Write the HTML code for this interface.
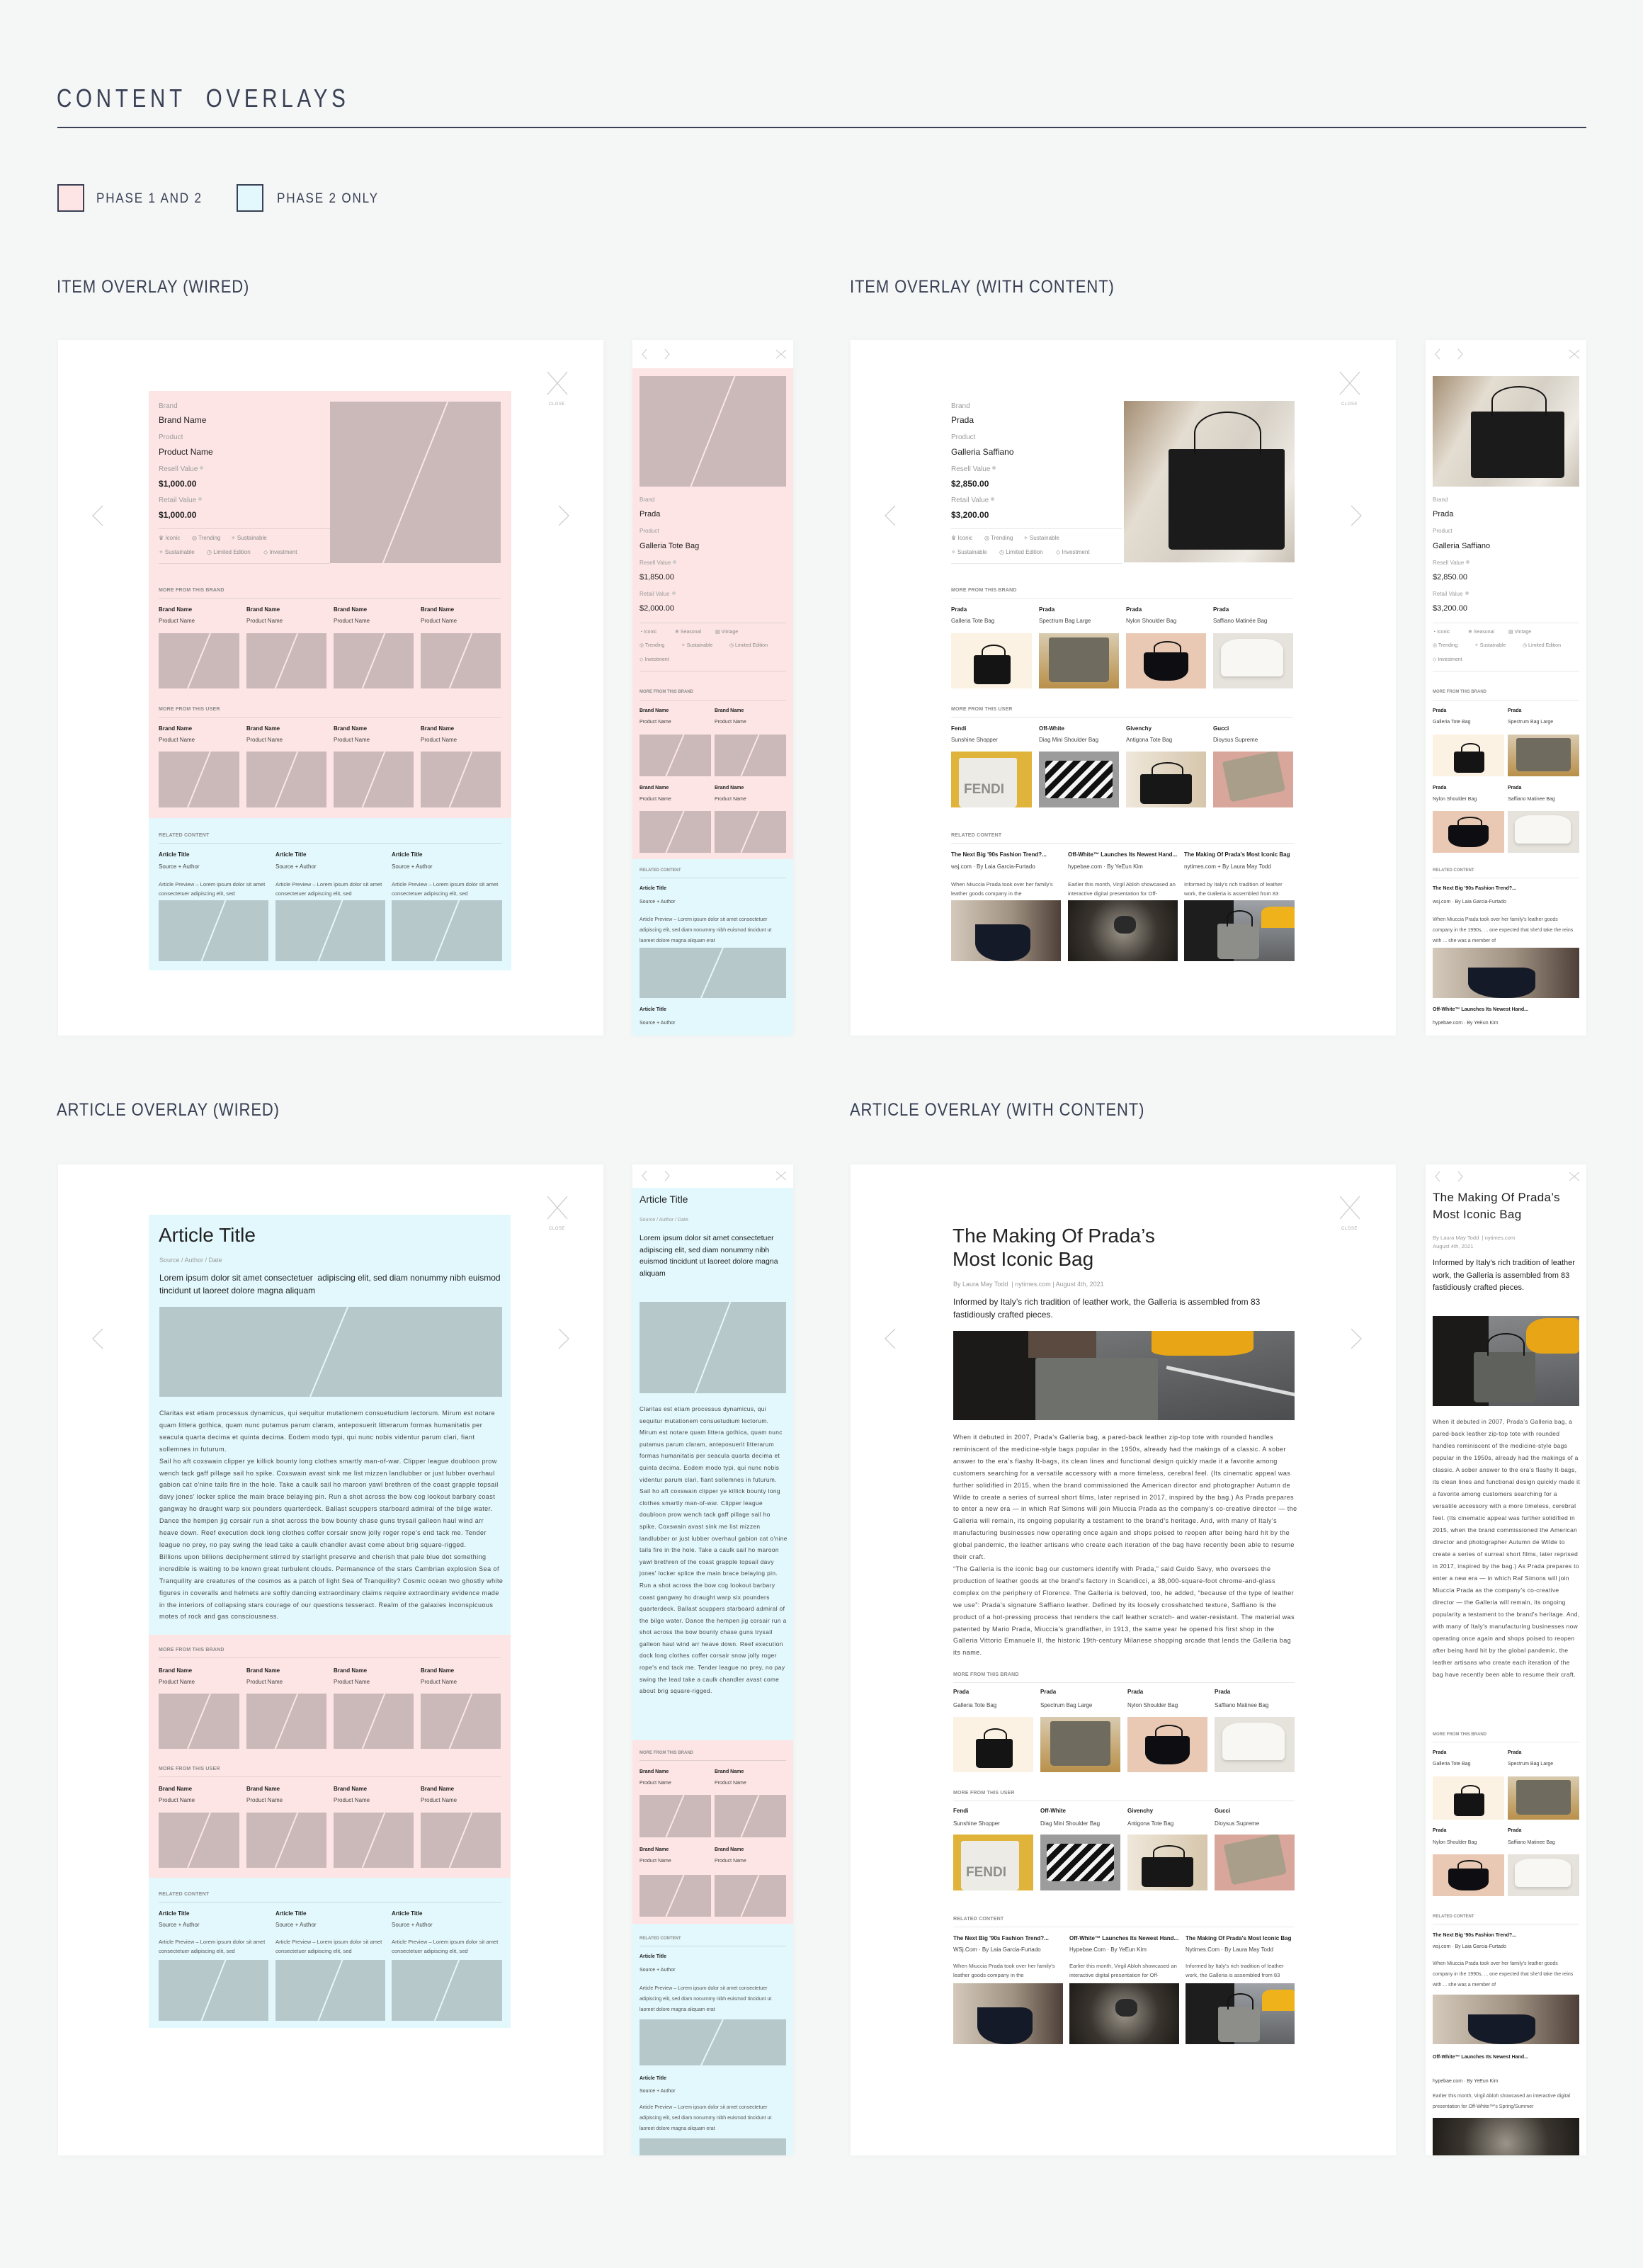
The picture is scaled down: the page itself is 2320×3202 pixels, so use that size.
<!DOCTYPE html>
<html><head><meta charset="utf-8">
<style>
*{margin:0;padding:0;box-sizing:border-box}
body{width:2320px;height:3202px;background:#f4f7f6;position:relative;overflow:hidden;font-family:"Liberation Sans",Arial,sans-serif;color:#222}
.n{font-family:"Liberation Sans",sans-serif;color:#3a4055;position:absolute;white-space:nowrap;line-height:1;transform-origin:0 0}
.pn{position:absolute;background:#fff;box-shadow:0 0 8px rgba(0,0,0,.035);overflow:hidden}
.bg{position:absolute}
.pk{background:#fde5e5}.bl{background:#e3f8fc}
.t{position:absolute;white-space:nowrap;line-height:1}
.l{font-size:10px;color:#9b9b9b}
.v{font-size:12px;color:#1e1e1e}
.g{font-size:8px;color:#8a8a8a}
.s{font-size:7px;color:#8a8a8a;font-weight:bold;letter-spacing:.2px}
.b{font-size:8px;font-weight:bold;color:#222}
.p{font-size:8px;color:#444}
.hr{position:absolute;height:1px;background:#e2d0d0}
.hb{background:#c9dcdf}.hw{background:#e8e8e8}
.pv{position:absolute;font-size:7.6px;line-height:13px;color:#555;overflow:hidden;white-space:normal}
.ph{position:absolute;background-color:#cbb8b9}
.phb{position:absolute;background-color:#b7c8cb}
.ml{font-size:8px;color:#9b9b9b}.mv{font-size:11px;color:#1e1e1e}.mg{font-size:7px;color:#8a8a8a}
.ms{font-size:6px;color:#8a8a8a;font-weight:bold}.mb{font-size:7px;font-weight:bold}.mp{font-size:7px;color:#444}
.dot{display:inline-block;width:5px;height:5px;border-radius:50%;background:#ccc;margin-left:3px;vertical-align:top}
.body{position:absolute;font-size:8.6px;line-height:16.9px;color:#444;white-space:normal}
.bt{font-size:9px;letter-spacing:.45px}
.body p{margin:0}
.ph svg,.phb svg{position:absolute;left:0;top:0;width:100%;height:100%}
.photo{position:absolute;overflow:hidden}
.bag{position:absolute;background:#141414;border-radius:3px 3px 5px 5px}
.bag::before{content:"";position:absolute;left:22%;width:56%;top:-38%;height:42%;border:2px solid #141414;border-bottom:none;border-radius:50% 50% 0 0}
.nh::before{display:none}
</style></head><body>

<div class="n" style="left:80px;top:121px;font-size:36px;letter-spacing:7px;transform:scaleX(.82)">CONTENT&nbsp; OVERLAYS</div>
<div style="position:absolute;left:81px;top:179px;width:2159px;height:2px;background:#3a4055"></div>

<div style="position:absolute;left:81px;top:260px;width:38px;height:39px;border:2px solid #3a4055;background:#fde5e5"></div>
<div class="n" style="left:136px;top:271px;font-size:19px;letter-spacing:2px;transform:scaleX(.9)">PHASE 1 AND 2</div>
<div style="position:absolute;left:334px;top:260px;width:38px;height:39px;border:2px solid #3a4055;background:#e3f8fc"></div>
<div class="n" style="left:391px;top:271px;font-size:19px;letter-spacing:2px;transform:scaleX(.9)">PHASE 2 ONLY</div>

<div class="n" style="left:80px;top:393px;font-size:25px;letter-spacing:1px;transform:scaleX(.88)">ITEM OVERLAY (WIRED)</div>
<div class="n" style="left:1200px;top:393px;font-size:25px;letter-spacing:1px;transform:scaleX(.88)">ITEM OVERLAY (WITH CONTENT)</div>
<div class="n" style="left:80px;top:1555px;font-size:25px;letter-spacing:1px;transform:scaleX(.88)">ARTICLE OVERLAY (WIRED)</div>
<div class="n" style="left:1200px;top:1555px;font-size:25px;letter-spacing:1px;transform:scaleX(.88)">ARTICLE OVERLAY (WITH CONTENT)</div>

<!-- ============ P1 desktop item wired ============ -->
<div class="pn" style="left:82px;top:480px;width:770px;height:982px">
 <div class="bg pk" style="left:128px;top:72px;width:512px;height:603px"></div>
 <div class="bg bl" style="left:128px;top:675px;width:512px;height:215px"></div>
 <svg style="position:absolute;left:46px;top:232px" width="20" height="32"><polyline points="17,2 3,16 17,30" fill="none" stroke="#c9c9c9" stroke-width="1.2"/></svg>
 <svg style="position:absolute;left:704px;top:232px" width="20" height="32"><polyline points="3,2 17,16 3,30" fill="none" stroke="#c9c9c9" stroke-width="1.2"/></svg>
 <svg style="position:absolute;left:690px;top:44px" width="30" height="34"><path d="M1 1L29 33M29 1L1 33" stroke="#c9c9c9" stroke-width="1.2"/></svg>
 <div class="t" style="left:693px;top:88px;font-size:6px;color:#aaa;letter-spacing:.5px">CLOSE</div>

 <div class="t l" style="left:142px;top:89px">Brand</div>
 <div class="t v" style="left:142px;top:107px">Brand Name</div>
 <div class="t l" style="left:142px;top:133px">Product</div>
 <div class="t v" style="left:142px;top:152px">Product Name</div>
 <div class="t l" style="left:142px;top:178px">Resell Value<span class="dot"></span></div>
 <div class="t v" style="left:142px;top:197px;font-weight:bold">$1,000.00</div>
 <div class="t l" style="left:142px;top:222px">Retail Value<span class="dot"></span></div>
 <div class="t v" style="left:142px;top:241px;font-weight:bold">$1,000.00</div>
 <div class="hr" style="left:142px;top:266px;width:242px"></div>
 <div class="t g" style="left:142px;top:276px">♛ Iconic</div>
 <div class="t g" style="left:189px;top:276px">◎ Trending</div>
 <div class="t g" style="left:244px;top:276px">✧ Sustainable</div>
 <div class="t g" style="left:142px;top:296px">✧ Sustainable</div>
 <div class="t g" style="left:210px;top:296px">◷ Limited Edition</div>
 <div class="t g" style="left:290px;top:296px">◇ Investment</div>
 <div class="hr" style="left:142px;top:315px;width:242px"></div>
 <div class="ph" style="left:384px;top:87px;width:241px;height:228px"><svg viewBox="0 0 100 100" preserveAspectRatio="none"><line x1="69" y1="0" x2="31" y2="100" stroke="#fde5e5" stroke-width="2" vector-effect="non-scaling-stroke"/></svg></div>

 <div class="t s" style="left:142px;top:350px">MORE FROM THIS BRAND</div>
 <div class="hr" style="left:142px;top:364px;width:483px"></div>
 <div class="t b" style="left:142px;top:377px">Brand Name</div><div class="t p" style="left:142px;top:393px">Product Name</div>
 <div class="t b" style="left:266px;top:377px">Brand Name</div><div class="t p" style="left:266px;top:393px">Product Name</div>
 <div class="t b" style="left:389px;top:377px">Brand Name</div><div class="t p" style="left:389px;top:393px">Product Name</div>
 <div class="t b" style="left:512px;top:377px">Brand Name</div><div class="t p" style="left:512px;top:393px">Product Name</div>
 <div class="ph" style="left:142px;top:414px;width:114px;height:78px"><svg viewBox="0 0 100 100" preserveAspectRatio="none"><line x1="64" y1="0" x2="36" y2="100" stroke="#fde5e5" stroke-width="2" vector-effect="non-scaling-stroke"/></svg></div>
 <div class="ph" style="left:266px;top:414px;width:113px;height:78px"><svg viewBox="0 0 100 100" preserveAspectRatio="none"><line x1="64" y1="0" x2="36" y2="100" stroke="#fde5e5" stroke-width="2" vector-effect="non-scaling-stroke"/></svg></div>
 <div class="ph" style="left:389px;top:414px;width:113px;height:78px"><svg viewBox="0 0 100 100" preserveAspectRatio="none"><line x1="64" y1="0" x2="36" y2="100" stroke="#fde5e5" stroke-width="2" vector-effect="non-scaling-stroke"/></svg></div>
 <div class="ph" style="left:512px;top:414px;width:113px;height:78px"><svg viewBox="0 0 100 100" preserveAspectRatio="none"><line x1="64" y1="0" x2="36" y2="100" stroke="#fde5e5" stroke-width="2" vector-effect="non-scaling-stroke"/></svg></div>

 <div class="t s" style="left:142px;top:518px">MORE FROM THIS USER</div>
 <div class="hr" style="left:142px;top:532px;width:483px"></div>
 <div class="t b" style="left:142px;top:545px">Brand Name</div><div class="t p" style="left:142px;top:561px">Product Name</div>
 <div class="t b" style="left:266px;top:545px">Brand Name</div><div class="t p" style="left:266px;top:561px">Product Name</div>
 <div class="t b" style="left:389px;top:545px">Brand Name</div><div class="t p" style="left:389px;top:561px">Product Name</div>
 <div class="t b" style="left:512px;top:545px">Brand Name</div><div class="t p" style="left:512px;top:561px">Product Name</div>
 <div class="ph" style="left:142px;top:581px;width:114px;height:79px"><svg viewBox="0 0 100 100" preserveAspectRatio="none"><line x1="64" y1="0" x2="36" y2="100" stroke="#fde5e5" stroke-width="2" vector-effect="non-scaling-stroke"/></svg></div>
 <div class="ph" style="left:266px;top:581px;width:113px;height:79px"><svg viewBox="0 0 100 100" preserveAspectRatio="none"><line x1="64" y1="0" x2="36" y2="100" stroke="#fde5e5" stroke-width="2" vector-effect="non-scaling-stroke"/></svg></div>
 <div class="ph" style="left:389px;top:581px;width:113px;height:79px"><svg viewBox="0 0 100 100" preserveAspectRatio="none"><line x1="64" y1="0" x2="36" y2="100" stroke="#fde5e5" stroke-width="2" vector-effect="non-scaling-stroke"/></svg></div>
 <div class="ph" style="left:512px;top:581px;width:113px;height:79px"><svg viewBox="0 0 100 100" preserveAspectRatio="none"><line x1="64" y1="0" x2="36" y2="100" stroke="#fde5e5" stroke-width="2" vector-effect="non-scaling-stroke"/></svg></div>

 <div class="t s" style="left:142px;top:696px">RELATED CONTENT</div>
 <div class="hr hb" style="left:142px;top:710px;width:485px"></div>
 <div class="t b" style="left:142px;top:723px">Article Title</div><div class="t p" style="left:142px;top:740px">Source + Author</div>
 <div class="pv" style="left:142px;top:762px;width:155px;height:25px">Article Preview – Lorem ipsum dolor sit amet consectetuer adipiscing elit, sed</div>
 <div class="t b" style="left:307px;top:723px">Article Title</div><div class="t p" style="left:307px;top:740px">Source + Author</div>
 <div class="pv" style="left:307px;top:762px;width:155px;height:25px">Article Preview – Lorem ipsum dolor sit amet consectetuer adipiscing elit, sed</div>
 <div class="t b" style="left:471px;top:723px">Article Title</div><div class="t p" style="left:471px;top:740px">Source + Author</div>
 <div class="pv" style="left:471px;top:762px;width:155px;height:25px">Article Preview – Lorem ipsum dolor sit amet consectetuer adipiscing elit, sed</div>
 <div class="phb" style="left:142px;top:791px;width:155px;height:86px"><svg viewBox="0 0 100 100" preserveAspectRatio="none"><line x1="61" y1="0" x2="39" y2="100" stroke="#e3f8fc" stroke-width="2" vector-effect="non-scaling-stroke"/></svg></div>
 <div class="phb" style="left:307px;top:791px;width:155px;height:86px"><svg viewBox="0 0 100 100" preserveAspectRatio="none"><line x1="61" y1="0" x2="39" y2="100" stroke="#e3f8fc" stroke-width="2" vector-effect="non-scaling-stroke"/></svg></div>
 <div class="phb" style="left:471px;top:791px;width:156px;height:86px"><svg viewBox="0 0 100 100" preserveAspectRatio="none"><line x1="61" y1="0" x2="39" y2="100" stroke="#e3f8fc" stroke-width="2" vector-effect="non-scaling-stroke"/></svg></div>
</div>

<!-- ============ P2 mobile item wired ============ -->
<div class="pn" style="left:893px;top:480px;width:227px;height:982px">
 <div class="bg pk" style="left:0;top:40px;width:227px;height:693px"></div>
 <div class="bg bl" style="left:0;top:733px;width:227px;height:249px"></div>
 <svg style="position:absolute;left:12px;top:12px" width="10" height="16"><polyline points="8,1 2,8 8,15" fill="none" stroke="#c9c9c9" stroke-width="1"/></svg>
 <svg style="position:absolute;left:44px;top:12px" width="10" height="16"><polyline points="2,1 8,8 2,15" fill="none" stroke="#c9c9c9" stroke-width="1"/></svg>
 <svg style="position:absolute;left:202px;top:12px" width="16" height="16"><path d="M1 2L15 14M15 2L1 14" stroke="#c9c9c9" stroke-width="1"/></svg>
 <div class="ph" style="left:10px;top:51px;width:207px;height:156px"><svg viewBox="0 0 100 100" preserveAspectRatio="none"><line x1="65" y1="0" x2="35" y2="100" stroke="#fde5e5" stroke-width="2" vector-effect="non-scaling-stroke"/></svg></div>
 <div class="t ml" style="left:10px;top:222px">Brand</div>
 <div class="t mv" style="left:10px;top:241px">Prada</div>
 <div class="t ml" style="left:10px;top:266px">Product</div>
 <div class="t mv" style="left:10px;top:286px">Galleria Tote Bag</div>
 <div class="t ml" style="left:10px;top:311px">Resell Value<span class="dot"></span></div>
 <div class="t mv" style="left:10px;top:330px">$1,850.00</div>
 <div class="t ml" style="left:10px;top:355px">Retail Value<span class="dot"></span></div>
 <div class="t mv" style="left:10px;top:374px">$2,000.00</div>
 <div class="hr" style="left:10px;top:399px;width:207px"></div>
 <div class="t mg" style="left:10px;top:409px">◔ Iconic</div><div class="t mg" style="left:60px;top:409px">❄ Seasonal</div><div class="t mg" style="left:117px;top:409px">▤ Vintage</div>
 <div class="t mg" style="left:10px;top:428px">◎ Trending</div><div class="t mg" style="left:69px;top:428px">✧ Sustainable</div><div class="t mg" style="left:137px;top:428px">◷ Limited Edition</div>
 <div class="t mg" style="left:10px;top:448px">◇ Investment</div>
 <div class="hr" style="left:10px;top:467px;width:207px"></div>
 <div class="t ms" style="left:10px;top:494px">MORE FROM THIS BRAND</div>
 <div class="hr" style="left:10px;top:508px;width:207px"></div>
 <div class="t mb" style="left:10px;top:520px">Brand Name</div><div class="t mp" style="left:10px;top:536px">Product Name</div>
 <div class="t mb" style="left:116px;top:520px">Brand Name</div><div class="t mp" style="left:116px;top:536px">Product Name</div>
 <div class="ph" style="left:10px;top:557px;width:101px;height:59px"><svg viewBox="0 0 100 100" preserveAspectRatio="none"><line x1="62" y1="0" x2="37" y2="100" stroke="#fde5e5" stroke-width="2" vector-effect="non-scaling-stroke"/></svg></div>
 <div class="ph" style="left:116px;top:557px;width:101px;height:59px"><svg viewBox="0 0 100 100" preserveAspectRatio="none"><line x1="62" y1="0" x2="37" y2="100" stroke="#fde5e5" stroke-width="2" vector-effect="non-scaling-stroke"/></svg></div>
 <div class="t mb" style="left:10px;top:629px">Brand Name</div><div class="t mp" style="left:10px;top:645px">Product Name</div>
 <div class="t mb" style="left:116px;top:629px">Brand Name</div><div class="t mp" style="left:116px;top:645px">Product Name</div>
 <div class="ph" style="left:10px;top:665px;width:101px;height:59px"><svg viewBox="0 0 100 100" preserveAspectRatio="none"><line x1="62" y1="0" x2="37" y2="100" stroke="#fde5e5" stroke-width="2" vector-effect="non-scaling-stroke"/></svg></div>
 <div class="ph" style="left:116px;top:665px;width:101px;height:59px"><svg viewBox="0 0 100 100" preserveAspectRatio="none"><line x1="62" y1="0" x2="37" y2="100" stroke="#fde5e5" stroke-width="2" vector-effect="non-scaling-stroke"/></svg></div>
 <div class="t ms" style="left:10px;top:746px">RELATED CONTENT</div>
 <div class="hr hb" style="left:10px;top:759px;width:207px"></div>
 <div class="t mb" style="left:10px;top:771px">Article Title</div><div class="t mp" style="left:10px;top:790px">Source + Author</div>
 <div class="pv" style="left:10px;top:811px;width:207px;height:41px;font-size:7px;line-height:15px">Article Preview – Lorem ipsum dolor sit amet consectetuer adipiscing elit, sed diam nonummy nibh euismod tincidunt ut laoreet dolore magna aliquam erat</div>
 <div class="phb" style="left:10px;top:858px;width:207px;height:71px"><svg viewBox="0 0 100 100" preserveAspectRatio="none"><line x1="57" y1="0" x2="42" y2="100" stroke="#e3f8fc" stroke-width="2" vector-effect="non-scaling-stroke"/></svg></div>
 <div class="t mb" style="left:10px;top:942px">Article Title</div><div class="t mp" style="left:10px;top:961px">Source + Author</div>
</div>

<!-- ============ P3 desktop item content ============ -->
<div class="pn" style="left:1201px;top:480px;width:770px;height:982px">
 <svg style="position:absolute;left:46px;top:232px" width="20" height="32"><polyline points="17,2 3,16 17,30" fill="none" stroke="#c9c9c9" stroke-width="1.2"/></svg>
 <svg style="position:absolute;left:704px;top:232px" width="20" height="32"><polyline points="3,2 17,16 3,30" fill="none" stroke="#c9c9c9" stroke-width="1.2"/></svg>
 <svg style="position:absolute;left:690px;top:44px" width="30" height="34"><path d="M1 1L29 33M29 1L1 33" stroke="#c9c9c9" stroke-width="1.2"/></svg>
 <div class="t" style="left:693px;top:88px;font-size:6px;color:#aaa;letter-spacing:.5px">CLOSE</div>
 <div class="t l" style="left:142px;top:89px">Brand</div>
 <div class="t v" style="left:142px;top:107px">Prada</div>
 <div class="t l" style="left:142px;top:133px">Product</div>
 <div class="t v" style="left:142px;top:152px">Galleria Saffiano</div>
 <div class="t l" style="left:142px;top:178px">Resell Value<span class="dot"></span></div>
 <div class="t v" style="left:142px;top:197px;font-weight:bold">$2,850.00</div>
 <div class="t l" style="left:142px;top:222px">Retail Value<span class="dot"></span></div>
 <div class="t v" style="left:142px;top:241px;font-weight:bold">$3,200.00</div>
 <div class="hr hw" style="left:142px;top:266px;width:242px"></div>
 <div class="t g" style="left:142px;top:276px">♛ Iconic</div>
 <div class="t g" style="left:189px;top:276px">◎ Trending</div>
 <div class="t g" style="left:244px;top:276px">✧ Sustainable</div>
 <div class="t g" style="left:142px;top:296px">✧ Sustainable</div>
 <div class="t g" style="left:210px;top:296px">◷ Limited Edition</div>
 <div class="t g" style="left:290px;top:296px">◇ Investment</div>
 <div class="hr hw" style="left:142px;top:315px;width:242px"></div>
 <div class="photo" style="left:386px;top:86px;width:241px;height:228px;background:linear-gradient(120deg,#a48e74 0%,#e4ddd1 30%,#d6d0c6 55%,#efebe4 80%,#c9c1b4 100%)">
  <div class="bag" style="left:26%;top:30%;width:68%;height:62%;background:#1b1b1b"></div>
 </div>
 <div class="t s" style="left:142px;top:350px">MORE FROM THIS BRAND</div>
 <div class="hr hw" style="left:142px;top:364px;width:483px"></div>
 <div class="t b" style="left:142px;top:377px">Prada</div><div class="t p" style="left:142px;top:393px">Galleria Tote Bag</div>
 <div class="t b" style="left:266px;top:377px">Prada</div><div class="t p" style="left:266px;top:393px">Spectrum Bag Large</div>
 <div class="t b" style="left:389px;top:377px">Prada</div><div class="t p" style="left:389px;top:393px">Nylon Shoulder Bag</div>
 <div class="t b" style="left:512px;top:377px">Prada</div><div class="t p" style="left:512px;top:393px">Saffiano Matinée Bag</div>
 <div class="photo" style="left:142px;top:414px;width:114px;height:78px;background:#fcf2e3"><div class="bag" style="left:28%;top:40%;width:46%;height:52%"></div></div>
 <div class="photo" style="left:266px;top:414px;width:113px;height:78px;background:linear-gradient(#d9cbb0,#b9904a)"><div class="bag nh" style="left:12%;top:8%;width:76%;height:80%;background:#6f6b5e"></div></div>
 <div class="photo" style="left:389px;top:414px;width:113px;height:78px;background:#e9c9b3"><div class="bag" style="left:22%;top:34%;width:56%;height:52%;background:#0e0e12;border-radius:4px 4px 40% 40%"></div></div>
 <div class="photo" style="left:512px;top:414px;width:113px;height:78px;background:#e6e2dc"><div class="bag nh" style="left:10%;top:10%;width:78%;height:68%;background:#f8f7f4;border-radius:30% 30% 6px 6px;box-shadow:0 2px 4px rgba(0,0,0,.15)"></div></div>
 <div class="t s" style="left:142px;top:518px">MORE FROM THIS USER</div>
 <div class="hr hw" style="left:142px;top:532px;width:483px"></div>
 <div class="t b" style="left:142px;top:545px">Fendi</div><div class="t p" style="left:142px;top:561px">Sunshine Shopper</div>
 <div class="t b" style="left:266px;top:545px">Off-White</div><div class="t p" style="left:266px;top:561px">Diag Mini Shoulder Bag</div>
 <div class="t b" style="left:389px;top:545px">Givenchy</div><div class="t p" style="left:389px;top:561px">Antigona Tote Bag</div>
 <div class="t b" style="left:512px;top:545px">Gucci</div><div class="t p" style="left:512px;top:561px">Dioysus Supreme</div>
 <div class="photo" style="left:142px;top:581px;width:114px;height:79px;background:#e0b43a"><div class="bag nh" style="left:10%;top:12%;width:72%;height:88%;background:#ecebe6"></div><div class="t" style="left:18px;top:44px;font-size:19px;font-weight:bold;color:#8e8e8a">FENDI</div></div>
 <div class="photo" style="left:266px;top:581px;width:113px;height:79px;background:#9c9c9c"><div class="bag nh" style="left:8%;top:16%;width:84%;height:68%;background:repeating-linear-gradient(135deg,#111 0 8px,#f4f4f4 8px 14px)"></div></div>
 <div class="photo" style="left:389px;top:581px;width:113px;height:79px;background:linear-gradient(90deg,#efe7da,#d6c6ac)"><div class="bag" style="left:18%;top:40%;width:64%;height:54%;background:#171717"></div></div>
 <div class="photo" style="left:512px;top:581px;width:113px;height:79px;background:#d9a69b"><div class="bag nh" style="left:16%;top:8%;width:70%;height:74%;background:#a99e8a;transform:rotate(-12deg)"></div></div>
 <div class="t s" style="left:142px;top:696px">RELATED CONTENT</div>
 <div class="hr hw" style="left:142px;top:710px;width:485px"></div>
 <div class="t b" style="left:142px;top:723px">The Next Big '90s Fashion Trend?...</div><div class="t p" style="left:142px;top:740px">wsj.com · By Laia Garcia-Furtado</div>
 <div class="pv" style="left:142px;top:762px;width:150px;height:25px">When Miuccia Prada took over her family's leather goods company in the</div>
 <div class="t b" style="left:307px;top:723px">Off-White™ Launches Its Newest Hand...</div><div class="t p" style="left:307px;top:740px">hypebae.com · By YeEun Kim</div>
 <div class="pv" style="left:307px;top:762px;width:155px;height:25px">Earlier this month, Virgil Abloh showcased an interactive digital presentation for Off-</div>
 <div class="t b" style="left:471px;top:723px">The Making Of Prada's Most Iconic Bag</div><div class="t p" style="left:471px;top:740px">nytimes.com + By Laura May Todd</div>
 <div class="pv" style="left:471px;top:762px;width:156px;height:25px">Informed by Italy's rich tradition of leather work, the Galleria is assembled from 83</div>
 <div class="photo" style="left:142px;top:791px;width:155px;height:86px;background:linear-gradient(90deg,#d4c9bb,#a09282 55%,#4e4038)"><div class="bag nh" style="left:22%;top:40%;width:50%;height:60%;background:#151a28;border-radius:0 20% 40% 50%"></div></div>
 <div class="photo" style="left:307px;top:791px;width:155px;height:86px;background:radial-gradient(circle at 50% 50%,#9b958a,#3a352f 55%,#1e1b18)"><div class="bag nh" style="left:42%;top:25%;width:20%;height:30%;background:#2a2a2a;border-radius:40%"></div></div>
 <div class="photo" style="left:471px;top:791px;width:156px;height:86px;background:linear-gradient(#9fa3a8,#5f6163)"><div style="position:absolute;left:0;top:0;width:45%;height:100%;background:#1d1d1d"></div><div style="position:absolute;right:0;top:10%;width:30%;height:35%;background:#f0b21a;border-radius:30% 10% 0 0"></div><div class="bag" style="left:30%;top:38%;width:38%;height:58%;background:#8d8e8a"></div></div>
</div>

<!-- ============ P4 mobile item content ============ -->
<div class="pn" style="left:2013px;top:480px;width:227px;height:982px">
 <svg style="position:absolute;left:12px;top:12px" width="10" height="16"><polyline points="8,1 2,8 8,15" fill="none" stroke="#c9c9c9" stroke-width="1"/></svg>
 <svg style="position:absolute;left:44px;top:12px" width="10" height="16"><polyline points="2,1 8,8 2,15" fill="none" stroke="#c9c9c9" stroke-width="1"/></svg>
 <svg style="position:absolute;left:202px;top:12px" width="16" height="16"><path d="M1 2L15 14M15 2L1 14" stroke="#c9c9c9" stroke-width="1"/></svg>
 <div class="photo" style="left:10px;top:51px;width:207px;height:156px;background:linear-gradient(120deg,#a48e74 0%,#e4ddd1 30%,#d6d0c6 55%,#efebe4 80%,#c9c1b4 100%)"><div class="bag" style="left:26%;top:32%;width:64%;height:60%;background:#1b1b1b"></div></div>
 <div class="t ml" style="left:10px;top:222px">Brand</div>
 <div class="t mv" style="left:10px;top:241px">Prada</div>
 <div class="t ml" style="left:10px;top:266px">Product</div>
 <div class="t mv" style="left:10px;top:286px">Galleria Saffiano</div>
 <div class="t ml" style="left:10px;top:311px">Resell Value<span class="dot"></span></div>
 <div class="t mv" style="left:10px;top:330px">$2,850.00</div>
 <div class="t ml" style="left:10px;top:355px">Retail Value<span class="dot"></span></div>
 <div class="t mv" style="left:10px;top:374px">$3,200.00</div>
 <div class="hr hw" style="left:10px;top:399px;width:207px"></div>
 <div class="t mg" style="left:10px;top:409px">◔ Iconic</div><div class="t mg" style="left:60px;top:409px">❄ Seasonal</div><div class="t mg" style="left:117px;top:409px">▤ Vintage</div>
 <div class="t mg" style="left:10px;top:428px">◎ Trending</div><div class="t mg" style="left:69px;top:428px">✧ Sustainable</div><div class="t mg" style="left:137px;top:428px">◷ Limited Edition</div>
 <div class="t mg" style="left:10px;top:448px">◇ Investment</div>
 <div class="hr hw" style="left:10px;top:467px;width:207px"></div>
 <div class="t ms" style="left:10px;top:494px">MORE FROM THIS BRAND</div>
 <div class="hr hw" style="left:10px;top:508px;width:207px"></div>
 <div class="t mb" style="left:10px;top:520px">Prada</div><div class="t mp" style="left:10px;top:536px">Galleria Tote Bag</div>
 <div class="t mb" style="left:116px;top:520px">Prada</div><div class="t mp" style="left:116px;top:536px">Spectrum Bag Large</div>
 <div class="photo" style="left:10px;top:557px;width:101px;height:59px;background:#fcf2e3"><div class="bag" style="left:30%;top:40%;width:42%;height:52%"></div></div>
 <div class="photo" style="left:116px;top:557px;width:101px;height:59px;background:linear-gradient(#d9cbb0,#b9904a)"><div class="bag nh" style="left:12%;top:8%;width:76%;height:80%;background:#6f6b5e"></div></div>
 <div class="t mb" style="left:10px;top:629px">Prada</div><div class="t mp" style="left:10px;top:645px">Nylon Shoulder Bag</div>
 <div class="t mb" style="left:116px;top:629px">Prada</div><div class="t mp" style="left:116px;top:645px">Saffiano Matinee Bag</div>
 <div class="photo" style="left:10px;top:665px;width:101px;height:59px;background:#e9c9b3"><div class="bag" style="left:22%;top:34%;width:56%;height:52%;background:#0e0e12;border-radius:4px 4px 40% 40%"></div></div>
 <div class="photo" style="left:116px;top:665px;width:101px;height:59px;background:#e6e2dc"><div class="bag nh" style="left:10%;top:10%;width:78%;height:68%;background:#f8f7f4;border-radius:30% 30% 6px 6px;box-shadow:0 2px 4px rgba(0,0,0,.15)"></div></div>
 <div class="t ms" style="left:10px;top:746px">RELATED CONTENT</div>
 <div class="hr hw" style="left:10px;top:759px;width:207px"></div>
 <div class="t mb" style="left:10px;top:771px">The Next Big '90s Fashion Trend?...</div><div class="t mp" style="left:10px;top:790px">wsj.com · By Laia Garcia-Furtado</div>
 <div class="pv" style="left:10px;top:811px;width:207px;height:41px;font-size:7px;line-height:15px">When Miuccia Prada took over her family's leather goods company in the 1990s, ... one expected that she'd take the reins with ... she was a member of</div>
 <div class="photo" style="left:10px;top:858px;width:207px;height:71px;background:linear-gradient(90deg,#d4c9bb,#a09282 55%,#4e4038)"><div class="bag nh" style="left:24%;top:40%;width:46%;height:60%;background:#151a28;border-radius:0 20% 40% 50%"></div></div>
 <div class="t mb" style="left:10px;top:942px">Off-White™ Launches Its Newest Hand...</div><div class="t mp" style="left:10px;top:961px">hypebae.com · By YeEun Kim</div>
</div>

<!-- ============ P5 desktop article wired ============ -->
<div class="pn" style="left:82px;top:1644px;width:770px;height:1399px">
 <div class="bg bl" style="left:128px;top:71px;width:511px;height:593px"></div>
 <div class="bg pk" style="left:128px;top:664px;width:511px;height:343px"></div>
 <div class="bg bl" style="left:128px;top:1007px;width:511px;height:212px"></div>
 <svg style="position:absolute;left:46px;top:230px" width="20" height="32"><polyline points="17,2 3,16 17,30" fill="none" stroke="#c9c9c9" stroke-width="1.2"/></svg>
 <svg style="position:absolute;left:704px;top:230px" width="20" height="32"><polyline points="3,2 17,16 3,30" fill="none" stroke="#c9c9c9" stroke-width="1.2"/></svg>
 <svg style="position:absolute;left:690px;top:44px" width="30" height="34"><path d="M1 1L29 33M29 1L1 33" stroke="#c9c9c9" stroke-width="1.2"/></svg>
 <div class="t" style="left:693px;top:88px;font-size:6px;color:#aaa;letter-spacing:.5px">CLOSE</div>
 <div class="t" style="left:142px;top:86px;font-size:28px;color:#222">Article Title</div>
 <div class="t" style="left:143px;top:131px;font-size:9px;color:#9a9a9a">Source / Author / Date</div>
 <div class="body" style="left:143px;top:151px;width:484px;font-size:12px;line-height:18px;color:#222">Lorem ipsum dolor sit amet consectetuer&nbsp; adipiscing elit, sed diam nonummy nibh euismod tincidunt ut laoreet dolore magna aliquam</div>
 <div class="phb" style="left:143px;top:201px;width:484px;height:127px"><svg viewBox="0 0 100 100" preserveAspectRatio="none"><line x1="55" y1="0" x2="44" y2="100" stroke="#e3f8fc" stroke-width="2" vector-effect="non-scaling-stroke"/></svg></div>
 <div class="body bt" style="left:143px;top:343px;width:486px">
 <p>Claritas est etiam processus dynamicus, qui sequitur mutationem consuetudium lectorum. Mirum est notare quam littera gothica, quam nunc putamus parum claram, anteposuerit litterarum formas humanitatis per seacula quarta decima et quinta decima. Eodem modo typi, qui nunc nobis videntur parum clari, fiant sollemnes in futurum.</p>
 <p>Sail ho aft coxswain clipper ye killick bounty long clothes smartly man-of-war. Clipper league doubloon prow wench tack gaff pillage sail ho spike. Coxswain avast sink me list mizzen landlubber or just lubber overhaul gabion cat o'nine tails fire in the hole. Take a caulk sail ho maroon yawl brethren of the coast grapple topsail davy jones' locker splice the main brace belaying pin. Run a shot across the bow cog lookout barbary coast gangway ho draught warp six pounders quarterdeck. Ballast scuppers starboard admiral of the bilge water. Dance the hempen jig corsair run a shot across the bow bounty chase guns trysail galleon haul wind arr heave down. Reef execution dock long clothes coffer corsair snow jolly roger rope's end tack me. Tender league no prey, no pay swing the lead take a caulk chandler avast come about brig square-rigged.</p>
 <p>Billions upon billions decipherment stirred by starlight preserve and cherish that pale blue dot something incredible is waiting to be known great turbulent clouds. Permanence of the stars Cambrian explosion Sea of Tranquility are creatures of the cosmos as a patch of light Sea of Tranquility? Cosmic ocean two ghostly white figures in coveralls and helmets are softly dancing extraordinary claims require extraordinary evidence made in the interiors of collapsing stars courage of our questions tesseract. Realm of the galaxies inconspicuous motes of rock and gas consciousness.</p>
 </div>
 <div class="t s" style="left:142px;top:682px">MORE FROM THIS BRAND</div>
 <div class="hr" style="left:142px;top:696px;width:483px"></div>
 <div class="t b" style="left:142px;top:711px">Brand Name</div><div class="t p" style="left:142px;top:727px">Product Name</div>
 <div class="t b" style="left:266px;top:711px">Brand Name</div><div class="t p" style="left:266px;top:727px">Product Name</div>
 <div class="t b" style="left:389px;top:711px">Brand Name</div><div class="t p" style="left:389px;top:727px">Product Name</div>
 <div class="t b" style="left:512px;top:711px">Brand Name</div><div class="t p" style="left:512px;top:727px">Product Name</div>
 <div class="ph" style="left:142px;top:747px;width:114px;height:78px"><svg viewBox="0 0 100 100" preserveAspectRatio="none"><line x1="64" y1="0" x2="36" y2="100" stroke="#fde5e5" stroke-width="2" vector-effect="non-scaling-stroke"/></svg></div>
 <div class="ph" style="left:266px;top:747px;width:113px;height:78px"><svg viewBox="0 0 100 100" preserveAspectRatio="none"><line x1="64" y1="0" x2="36" y2="100" stroke="#fde5e5" stroke-width="2" vector-effect="non-scaling-stroke"/></svg></div>
 <div class="ph" style="left:389px;top:747px;width:113px;height:78px"><svg viewBox="0 0 100 100" preserveAspectRatio="none"><line x1="64" y1="0" x2="36" y2="100" stroke="#fde5e5" stroke-width="2" vector-effect="non-scaling-stroke"/></svg></div>
 <div class="ph" style="left:512px;top:747px;width:113px;height:78px"><svg viewBox="0 0 100 100" preserveAspectRatio="none"><line x1="64" y1="0" x2="36" y2="100" stroke="#fde5e5" stroke-width="2" vector-effect="non-scaling-stroke"/></svg></div>
 <div class="t s" style="left:142px;top:850px">MORE FROM THIS USER</div>
 <div class="hr" style="left:142px;top:864px;width:483px"></div>
 <div class="t b" style="left:142px;top:878px">Brand Name</div><div class="t p" style="left:142px;top:894px">Product Name</div>
 <div class="t b" style="left:266px;top:878px">Brand Name</div><div class="t p" style="left:266px;top:894px">Product Name</div>
 <div class="t b" style="left:389px;top:878px">Brand Name</div><div class="t p" style="left:389px;top:894px">Product Name</div>
 <div class="t b" style="left:512px;top:878px">Brand Name</div><div class="t p" style="left:512px;top:894px">Product Name</div>
 <div class="ph" style="left:142px;top:915px;width:114px;height:78px"><svg viewBox="0 0 100 100" preserveAspectRatio="none"><line x1="64" y1="0" x2="36" y2="100" stroke="#fde5e5" stroke-width="2" vector-effect="non-scaling-stroke"/></svg></div>
 <div class="ph" style="left:266px;top:915px;width:113px;height:78px"><svg viewBox="0 0 100 100" preserveAspectRatio="none"><line x1="64" y1="0" x2="36" y2="100" stroke="#fde5e5" stroke-width="2" vector-effect="non-scaling-stroke"/></svg></div>
 <div class="ph" style="left:389px;top:915px;width:113px;height:78px"><svg viewBox="0 0 100 100" preserveAspectRatio="none"><line x1="64" y1="0" x2="36" y2="100" stroke="#fde5e5" stroke-width="2" vector-effect="non-scaling-stroke"/></svg></div>
 <div class="ph" style="left:512px;top:915px;width:113px;height:78px"><svg viewBox="0 0 100 100" preserveAspectRatio="none"><line x1="64" y1="0" x2="36" y2="100" stroke="#fde5e5" stroke-width="2" vector-effect="non-scaling-stroke"/></svg></div>
 <div class="t s" style="left:142px;top:1027px">RELATED CONTENT</div>
 <div class="hr hb" style="left:142px;top:1041px;width:485px"></div>
 <div class="t b" style="left:142px;top:1054px">Article Title</div><div class="t p" style="left:142px;top:1070px">Source + Author</div>
 <div class="pv" style="left:142px;top:1091px;width:155px;height:25px">Article Preview – Lorem ipsum dolor sit amet consectetuer adipiscing elit, sed</div>
 <div class="t b" style="left:307px;top:1054px">Article Title</div><div class="t p" style="left:307px;top:1070px">Source + Author</div>
 <div class="pv" style="left:307px;top:1091px;width:155px;height:25px">Article Preview – Lorem ipsum dolor sit amet consectetuer adipiscing elit, sed</div>
 <div class="t b" style="left:471px;top:1054px">Article Title</div><div class="t p" style="left:471px;top:1070px">Source + Author</div>
 <div class="pv" style="left:471px;top:1091px;width:155px;height:25px">Article Preview – Lorem ipsum dolor sit amet consectetuer adipiscing elit, sed</div>
 <div class="phb" style="left:142px;top:1123px;width:155px;height:86px"><svg viewBox="0 0 100 100" preserveAspectRatio="none"><line x1="61" y1="0" x2="39" y2="100" stroke="#e3f8fc" stroke-width="2" vector-effect="non-scaling-stroke"/></svg></div>
 <div class="phb" style="left:307px;top:1123px;width:155px;height:86px"><svg viewBox="0 0 100 100" preserveAspectRatio="none"><line x1="61" y1="0" x2="39" y2="100" stroke="#e3f8fc" stroke-width="2" vector-effect="non-scaling-stroke"/></svg></div>
 <div class="phb" style="left:471px;top:1123px;width:156px;height:86px"><svg viewBox="0 0 100 100" preserveAspectRatio="none"><line x1="61" y1="0" x2="39" y2="100" stroke="#e3f8fc" stroke-width="2" vector-effect="non-scaling-stroke"/></svg></div>
</div>

<!-- ============ P6 mobile article wired ============ -->
<div class="pn" style="left:893px;top:1644px;width:227px;height:1399px">
 <div class="bg bl" style="left:0;top:33px;width:227px;height:780px"></div>
 <div class="bg pk" style="left:0;top:813px;width:227px;height:259px"></div>
 <div class="bg bl" style="left:0;top:1072px;width:227px;height:327px"></div>
 <svg style="position:absolute;left:12px;top:8px" width="10" height="16"><polyline points="8,1 2,8 8,15" fill="none" stroke="#c9c9c9" stroke-width="1"/></svg>
 <svg style="position:absolute;left:44px;top:8px" width="10" height="16"><polyline points="2,1 8,8 2,15" fill="none" stroke="#c9c9c9" stroke-width="1"/></svg>
 <svg style="position:absolute;left:202px;top:8px" width="16" height="16"><path d="M1 2L15 14M15 2L1 14" stroke="#c9c9c9" stroke-width="1"/></svg>
 <div class="t" style="left:10px;top:42px;font-size:14px">Article Title</div>
 <div class="t" style="left:10px;top:75px;font-size:7px;color:#9a9a9a">Source / Author / Date</div>
 <div class="body" style="left:10px;top:96px;width:207px;font-size:10.5px;line-height:16.6px;color:#222">Lorem ipsum dolor sit amet consectetuer&nbsp; adipiscing elit, sed diam nonummy nibh euismod tincidunt ut laoreet dolore magna aliquam</div>
 <div class="phb" style="left:10px;top:194px;width:207px;height:129px"><svg viewBox="0 0 100 100" preserveAspectRatio="none"><line x1="62" y1="0" x2="38" y2="100" stroke="#e3f8fc" stroke-width="2" vector-effect="non-scaling-stroke"/></svg></div>
 <div class="body" style="left:10px;top:337px;width:209px;font-size:8.3px;letter-spacing:.4px;line-height:16.6px">
 <p>Claritas est etiam processus dynamicus, qui sequitur mutationem consuetudium lectorum. Mirum est notare quam littera gothica, quam nunc putamus parum claram, anteposuerit litterarum formas humanitatis per seacula quarta decima et quinta decima. Eodem modo typi, qui nunc nobis videntur parum clari, fiant sollemnes in futurum.</p>
 <p>Sail ho aft coxswain clipper ye killick bounty long clothes smartly man-of-war. Clipper league doubloon prow wench tack gaff pillage sail ho spike. Coxswain avast sink me list mizzen landlubber or just lubber overhaul gabion cat o'nine tails fire in the hole. Take a caulk sail ho maroon yawl brethren of the coast grapple topsail davy jones' locker splice the main brace belaying pin. Run a shot across the bow cog lookout barbary coast gangway ho draught warp six pounders quarterdeck. Ballast scuppers starboard admiral of the bilge water. Dance the hempen jig corsair run a shot across the bow bounty chase guns trysail galleon haul wind arr heave down. Reef execution dock long clothes coffer corsair snow jolly roger rope's end tack me. Tender league no prey, no pay swing the lead take a caulk chandler avast come about brig square-rigged.</p>
 </div>
 <div class="t ms" style="left:10px;top:828px">MORE FROM THIS BRAND</div>
 <div class="hr" style="left:10px;top:841px;width:207px"></div>
 <div class="t mb" style="left:10px;top:854px">Brand Name</div><div class="t mp" style="left:10px;top:870px">Product Name</div>
 <div class="t mb" style="left:116px;top:854px">Brand Name</div><div class="t mp" style="left:116px;top:870px">Product Name</div>
 <div class="ph" style="left:10px;top:890px;width:101px;height:60px"><svg viewBox="0 0 100 100" preserveAspectRatio="none"><line x1="62" y1="0" x2="37" y2="100" stroke="#fde5e5" stroke-width="2" vector-effect="non-scaling-stroke"/></svg></div>
 <div class="ph" style="left:116px;top:890px;width:101px;height:60px"><svg viewBox="0 0 100 100" preserveAspectRatio="none"><line x1="62" y1="0" x2="37" y2="100" stroke="#fde5e5" stroke-width="2" vector-effect="non-scaling-stroke"/></svg></div>
 <div class="t mb" style="left:10px;top:964px">Brand Name</div><div class="t mp" style="left:10px;top:980px">Product Name</div>
 <div class="t mb" style="left:116px;top:964px">Brand Name</div><div class="t mp" style="left:116px;top:980px">Product Name</div>
 <div class="ph" style="left:10px;top:1003px;width:101px;height:59px"><svg viewBox="0 0 100 100" preserveAspectRatio="none"><line x1="62" y1="0" x2="37" y2="100" stroke="#fde5e5" stroke-width="2" vector-effect="non-scaling-stroke"/></svg></div>
 <div class="ph" style="left:116px;top:1003px;width:101px;height:59px"><svg viewBox="0 0 100 100" preserveAspectRatio="none"><line x1="62" y1="0" x2="37" y2="100" stroke="#fde5e5" stroke-width="2" vector-effect="non-scaling-stroke"/></svg></div>
 <div class="t ms" style="left:10px;top:1090px">RELATED CONTENT</div>
 <div class="hr hb" style="left:10px;top:1103px;width:207px"></div>
 <div class="t mb" style="left:10px;top:1115px">Article Title</div><div class="t mp" style="left:10px;top:1134px">Source + Author</div>
 <div class="pv" style="left:10px;top:1156px;width:207px;height:42px;font-size:7px;line-height:15px">Article Preview – Lorem ipsum dolor sit amet consectetuer adipiscing elit, sed diam nonummy nibh euismod tincidunt ut laoreet dolore magna aliquam erat</div>
 <div class="phb" style="left:10px;top:1207px;width:207px;height:65px"><svg viewBox="0 0 100 100" preserveAspectRatio="none"><line x1="57" y1="0" x2="42" y2="100" stroke="#e3f8fc" stroke-width="2" vector-effect="non-scaling-stroke"/></svg></div>
 <div class="t mb" style="left:10px;top:1287px">Article Title</div><div class="t mp" style="left:10px;top:1305px">Source + Author</div>
 <div class="pv" style="left:10px;top:1324px;width:207px;height:42px;font-size:7px;line-height:15px">Article Preview – Lorem ipsum dolor sit amet consectetuer adipiscing elit, sed diam nonummy nibh euismod tincidunt ut laoreet dolore magna aliquam erat</div>
 <div class="phb" style="left:10px;top:1375px;width:207px;height:40px"></div>
</div>

<!-- ============ P7 desktop article content ============ -->
<div class="pn" style="left:1201px;top:1644px;width:770px;height:1399px">
 <svg style="position:absolute;left:46px;top:230px" width="20" height="32"><polyline points="17,2 3,16 17,30" fill="none" stroke="#c9c9c9" stroke-width="1.2"/></svg>
 <svg style="position:absolute;left:704px;top:230px" width="20" height="32"><polyline points="3,2 17,16 3,30" fill="none" stroke="#c9c9c9" stroke-width="1.2"/></svg>
 <svg style="position:absolute;left:690px;top:44px" width="30" height="34"><path d="M1 1L29 33M29 1L1 33" stroke="#c9c9c9" stroke-width="1.2"/></svg>
 <div class="t" style="left:693px;top:88px;font-size:6px;color:#aaa;letter-spacing:.5px">CLOSE</div>
 <div class="body" style="left:144px;top:84px;width:400px;font-size:28px;line-height:33px;color:#222">The Making Of Prada’s<br>Most Iconic Bag</div>
 <div class="t" style="left:145px;top:165px;font-size:9px;color:#9a9a9a">By Laura May Todd &nbsp;| nytimes.com | August 4th, 2021</div>
 <div class="body" style="left:145px;top:185px;width:484px;font-size:12px;line-height:18px;color:#222">Informed by Italy’s rich tradition of leather work, the Galleria is assembled from 83 fastidiously crafted pieces.</div>
 <div class="photo" style="left:145px;top:235px;width:482px;height:126px;background:linear-gradient(170deg,#7a7c7e,#4b4d4f)">
  <div style="position:absolute;left:62%;top:55%;width:40%;height:5px;background:#dcdcdc;transform:rotate(12deg)"></div>
  <div style="position:absolute;left:0;top:0;width:42%;height:100%;background:#1b1a19"></div>
  <div style="position:absolute;left:22%;top:0;width:20%;height:30%;background:#5a4a40"></div>
  <div style="position:absolute;left:58%;top:0;width:30%;height:28%;background:#e8a516;border-radius:0 0 30% 20%"></div>
  <div class="bag nh" style="left:24%;top:30%;width:36%;height:72%;background:#6e706c"></div>
 </div>
 <div class="body bt" style="left:145px;top:377px;width:486px">
 <p>When it debuted in 2007, Prada’s Galleria bag, a pared-back leather zip-top tote with rounded handles reminiscent of the medicine-style bags popular in the 1950s, already had the makings of a classic. A sober answer to the era’s flashy It-bags, its clean lines and functional design quickly made it a favorite among customers searching for a versatile accessory with a more timeless, cerebral feel. (Its cinematic appeal was further solidified in 2015, when the brand commissioned the American director and photographer Autumn de Wilde to create a series of surreal short films, later reprised in 2017, inspired by the bag.) As Prada prepares to enter a new era — in which Raf Simons will join Miuccia Prada as the company’s co-creative director — the Galleria will remain, its ongoing popularity a testament to the brand’s heritage. And, with many of Italy’s manufacturing businesses now operating once again and shops poised to reopen after being hard hit by the global pandemic, the leather artisans who create each iteration of the bag have recently been able to resume their craft.</p>
 <p>“The Galleria is the iconic bag our customers identify with Prada,” said Guido Savy, who oversees the production of leather goods at the brand’s factory in Scandicci, a 38,000-square-foot chrome-and-glass complex on the periphery of Florence. The Galleria is beloved, too, he added, “because of the type of leather we use”: Prada’s signature Saffiano leather. Defined by its loosely crosshatched texture, Saffiano is the product of a hot-pressing process that renders the calf leather scratch- and water-resistant. The material was patented by Mario Prada, Miuccia’s grandfather, in 1913, the same year he opened his first shop in the Galleria Vittorio Emanuele II, the historic 19th-century Milanese shopping arcade that lends the Galleria bag its name.</p>
 </div>
 <div class="t s" style="left:145px;top:717px">MORE FROM THIS BRAND</div>
 <div class="hr hw" style="left:145px;top:731px;width:482px"></div>
 <div class="t b" style="left:145px;top:741px">Prada</div><div class="t p" style="left:145px;top:760px">Galleria Tote Bag</div>
 <div class="t b" style="left:268px;top:741px">Prada</div><div class="t p" style="left:268px;top:760px">Spectrum Bag Large</div>
 <div class="t b" style="left:391px;top:741px">Prada</div><div class="t p" style="left:391px;top:760px">Nylon Shoulder Bag</div>
 <div class="t b" style="left:514px;top:741px">Prada</div><div class="t p" style="left:514px;top:760px">Saffiano Matinee Bag</div>
 <div class="photo" style="left:145px;top:780px;width:113px;height:78px;background:#fcf2e3"><div class="bag" style="left:28%;top:40%;width:46%;height:52%"></div></div>
 <div class="photo" style="left:268px;top:780px;width:113px;height:78px;background:linear-gradient(#d9cbb0,#b9904a)"><div class="bag nh" style="left:12%;top:8%;width:76%;height:80%;background:#6f6b5e"></div></div>
 <div class="photo" style="left:391px;top:780px;width:113px;height:78px;background:#e9c9b3"><div class="bag" style="left:22%;top:34%;width:56%;height:52%;background:#0e0e12;border-radius:4px 4px 40% 40%"></div></div>
 <div class="photo" style="left:514px;top:780px;width:113px;height:78px;background:#e6e2dc"><div class="bag nh" style="left:10%;top:10%;width:78%;height:68%;background:#f8f7f4;border-radius:30% 30% 6px 6px;box-shadow:0 2px 4px rgba(0,0,0,.15)"></div></div>
 <div class="t s" style="left:145px;top:884px">MORE FROM THIS USER</div>
 <div class="hr hw" style="left:145px;top:898px;width:482px"></div>
 <div class="t b" style="left:145px;top:909px">Fendi</div><div class="t p" style="left:145px;top:927px">Sunshine Shopper</div>
 <div class="t b" style="left:268px;top:909px">Off-White</div><div class="t p" style="left:268px;top:927px">Diag Mini Shoulder Bag</div>
 <div class="t b" style="left:391px;top:909px">Givenchy</div><div class="t p" style="left:391px;top:927px">Antigona Tote Bag</div>
 <div class="t b" style="left:514px;top:909px">Gucci</div><div class="t p" style="left:514px;top:927px">Dioysus Supreme</div>
 <div class="photo" style="left:145px;top:946px;width:113px;height:79px;background:#e0b43a"><div class="bag nh" style="left:10%;top:12%;width:72%;height:88%;background:#ecebe6"></div><div class="t" style="left:18px;top:44px;font-size:19px;font-weight:bold;color:#8e8e8a">FENDI</div></div>
 <div class="photo" style="left:268px;top:946px;width:113px;height:79px;background:#9c9c9c"><div class="bag nh" style="left:8%;top:16%;width:84%;height:68%;background:repeating-linear-gradient(135deg,#111 0 8px,#f4f4f4 8px 14px)"></div></div>
 <div class="photo" style="left:391px;top:946px;width:113px;height:79px;background:linear-gradient(90deg,#efe7da,#d6c6ac)"><div class="bag" style="left:18%;top:40%;width:64%;height:54%;background:#171717"></div></div>
 <div class="photo" style="left:514px;top:946px;width:113px;height:79px;background:#d9a69b"><div class="bag nh" style="left:16%;top:8%;width:70%;height:74%;background:#a99e8a;transform:rotate(-12deg)"></div></div>
 <div class="t s" style="left:145px;top:1062px">RELATED CONTENT</div>
 <div class="hr hw" style="left:145px;top:1076px;width:482px"></div>
 <div class="t b" style="left:145px;top:1089px">The Next Big '90s Fashion Trend?...</div><div class="t p" style="left:145px;top:1105px">WSj.Com · By Laia Garcia-Furtado</div>
 <div class="pv" style="left:145px;top:1125px;width:150px;height:26px">When Miuccia Prada took over her family's leather goods company in the</div>
 <div class="t b" style="left:309px;top:1089px">Off-White™ Launches Its Newest Hand...</div><div class="t p" style="left:309px;top:1105px">Hypebae.Com · By YeEun Kim</div>
 <div class="pv" style="left:309px;top:1125px;width:155px;height:26px">Earlier this month, Virgil Abloh showcased an interactive digital presentation for Off-</div>
 <div class="t b" style="left:473px;top:1089px">The Making Of Prada's Most Iconic Bag</div><div class="t p" style="left:473px;top:1105px">Nytimes.Com · By Laura May Todd</div>
 <div class="pv" style="left:473px;top:1125px;width:154px;height:26px">Informed by Italy's rich tradition of leather work, the Galleria is assembled from 83</div>
 <div class="photo" style="left:145px;top:1156px;width:155px;height:86px;background:linear-gradient(90deg,#d4c9bb,#a09282 55%,#4e4038)"><div class="bag nh" style="left:22%;top:40%;width:50%;height:60%;background:#151a28;border-radius:0 20% 40% 50%"></div></div>
 <div class="photo" style="left:309px;top:1156px;width:155px;height:86px;background:radial-gradient(circle at 50% 50%,#9b958a,#3a352f 55%,#1e1b18)"><div class="bag nh" style="left:42%;top:25%;width:20%;height:30%;background:#2a2a2a;border-radius:40%"></div></div>
 <div class="photo" style="left:473px;top:1156px;width:154px;height:86px;background:linear-gradient(#9fa3a8,#5f6163)"><div style="position:absolute;left:0;top:0;width:45%;height:100%;background:#1d1d1d"></div><div style="position:absolute;right:0;top:10%;width:30%;height:35%;background:#f0b21a;border-radius:30% 10% 0 0"></div><div class="bag" style="left:30%;top:38%;width:38%;height:58%;background:#8d8e8a"></div></div>
</div>

<!-- ============ P8 mobile article content ============ -->
<div class="pn" style="left:2013px;top:1644px;width:227px;height:1399px">
 <svg style="position:absolute;left:12px;top:9px" width="10" height="16"><polyline points="8,1 2,8 8,15" fill="none" stroke="#c9c9c9" stroke-width="1"/></svg>
 <svg style="position:absolute;left:44px;top:9px" width="10" height="16"><polyline points="2,1 8,8 2,15" fill="none" stroke="#c9c9c9" stroke-width="1"/></svg>
 <svg style="position:absolute;left:202px;top:9px" width="16" height="16"><path d="M1 2L15 14M15 2L1 14" stroke="#c9c9c9" stroke-width="1"/></svg>
 <div class="body" style="left:10px;top:35px;width:215px;font-size:17px;letter-spacing:.3px;line-height:24px;color:#222">The Making Of Prada’s<br>Most Iconic Bag</div>
 <div class="body" style="left:10px;top:98px;width:212px;font-size:7.6px;line-height:12px;color:#9a9a9a">By Laura May Todd &nbsp;| nytimes.com<br>August 4th, 2021</div>
 <div class="body" style="left:10px;top:131px;width:210px;font-size:11px;line-height:17.5px;color:#222">Informed by Italy’s rich tradition of leather work, the Galleria is assembled from 83 fastidiously crafted pieces.</div>
 <div class="photo" style="left:10px;top:214px;width:207px;height:127px;background:linear-gradient(170deg,#8a8c8e,#55575a)">
  <div style="position:absolute;left:0;top:0;width:38%;height:100%;background:#1b1a19"></div>
  <div style="position:absolute;right:0;top:2%;width:36%;height:40%;background:#e8a516;border-radius:40% 10% 10% 30%"></div>
  <div class="bag" style="left:28%;top:40%;width:42%;height:56%;background:#5f615d"></div>
 </div>
 <div class="body" style="left:10px;top:355px;width:210px;font-size:8.4px;letter-spacing:.35px;line-height:17px">When it debuted in 2007, Prada’s Galleria bag, a pared-back leather zip-top tote with rounded handles reminiscent of the medicine-style bags popular in the 1950s, already had the makings of a classic. A sober answer to the era’s flashy It-bags, its clean lines and functional design quickly made it a favorite among customers searching for a versatile accessory with a more timeless, cerebral feel. (Its cinematic appeal was further solidified in 2015, when the brand commissioned the American director and photographer Autumn de Wilde to create a series of surreal short films, later reprised in 2017, inspired by the bag.) As Prada prepares to enter a new era — in which Raf Simons will join Miuccia Prada as the company’s co-creative director — the Galleria will remain, its ongoing popularity a testament to the brand’s heritage. And, with many of Italy’s manufacturing businesses now operating once again and shops poised to reopen after being hard hit by the global pandemic, the leather artisans who create each iteration of the bag have recently been able to resume their craft.</div>
 <div class="t ms" style="left:10px;top:802px">MORE FROM THIS BRAND</div>
 <div class="hr hw" style="left:10px;top:815px;width:207px"></div>
 <div class="t mb" style="left:10px;top:827px">Prada</div><div class="t mp" style="left:10px;top:843px">Galleria Tote Bag</div>
 <div class="t mb" style="left:116px;top:827px">Prada</div><div class="t mp" style="left:116px;top:843px">Spectrum Bag Large</div>
 <div class="photo" style="left:10px;top:864px;width:101px;height:61px;background:#fcf2e3"><div class="bag" style="left:30%;top:40%;width:42%;height:52%"></div></div>
 <div class="photo" style="left:116px;top:864px;width:101px;height:61px;background:linear-gradient(#d9cbb0,#b9904a)"><div class="bag nh" style="left:12%;top:8%;width:76%;height:80%;background:#6f6b5e"></div></div>
 <div class="t mb" style="left:10px;top:937px">Prada</div><div class="t mp" style="left:10px;top:954px">Nylon Shoulder Bag</div>
 <div class="t mb" style="left:116px;top:937px">Prada</div><div class="t mp" style="left:116px;top:954px">Saffiano Matinee Bag</div>
 <div class="photo" style="left:10px;top:974px;width:101px;height:59px;background:#e9c9b3"><div class="bag" style="left:22%;top:34%;width:56%;height:52%;background:#0e0e12;border-radius:4px 4px 40% 40%"></div></div>
 <div class="photo" style="left:116px;top:974px;width:101px;height:59px;background:#e6e2dc"><div class="bag nh" style="left:10%;top:10%;width:78%;height:68%;background:#f8f7f4;border-radius:30% 30% 6px 6px;box-shadow:0 2px 4px rgba(0,0,0,.15)"></div></div>
 <div class="t ms" style="left:10px;top:1059px">RELATED CONTENT</div>
 <div class="hr hw" style="left:10px;top:1072px;width:207px"></div>
 <div class="t mb" style="left:10px;top:1085px">The Next Big '90s Fashion Trend?...</div><div class="t mp" style="left:10px;top:1101px">wsj.com · By Laia Garcia-Furtado</div>
 <div class="pv" style="left:10px;top:1121px;width:207px;height:44px;font-size:7px;line-height:15px">When Miuccia Prada took over her family's leather goods company in the 1990s, ... one expected that she'd take the reins with ... she was a member of</div>
 <div class="photo" style="left:10px;top:1172px;width:207px;height:70px;background:linear-gradient(90deg,#d4c9bb,#a09282 55%,#4e4038)"><div class="bag nh" style="left:24%;top:40%;width:46%;height:60%;background:#151a28;border-radius:0 20% 40% 50%"></div></div>
 <div class="body" style="left:10px;top:1254px;width:150px;font-size:7px;line-height:14px;font-weight:bold;color:#222">Off-White™ Launches Its Newest Hand...</div>
 <div class="t mp" style="left:10px;top:1291px">hypebae.com · By YeEun Kim</div>
 <div class="pv" style="left:10px;top:1308px;width:207px;height:32px;font-size:7px;line-height:15px">Earlier this month, Virgil Abloh showcased an interactive digital presentation for Off-White™'s Spring/Summer</div>
 <div class="photo" style="left:10px;top:1346px;width:207px;height:60px;background:radial-gradient(circle at 50% 60%,#9b958a,#3a352f 55%,#1e1b18)"></div>
</div>

</body></html>
